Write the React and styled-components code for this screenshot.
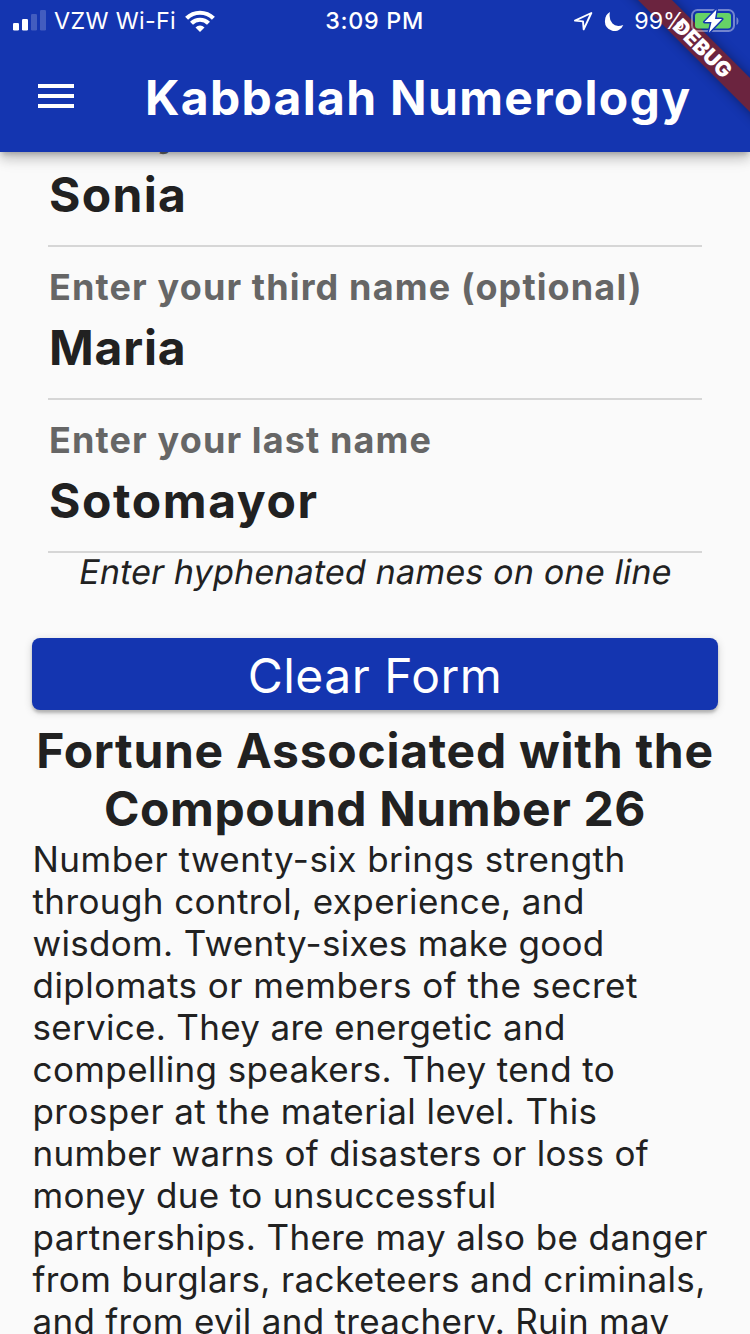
import React from "react";
import styled, { createGlobalStyle } from "styled-components";

const Global = createGlobalStyle`
  * { box-sizing: border-box; }
  body { margin: 0; background: #fafafa; }
`;

const Screen = styled.div`
  position: relative;
  display: flex;
  flex-direction: column;
  width: 750px;
  height: 1334px;
  overflow: hidden;
  background: #fafafa;
  color: #212121;
  font-family: Inter, "Liberation Sans", sans-serif;
`;

const Header = styled.header`
  position: relative;
  z-index: 1;
  flex: none;
  height: 152px;
  background: #1435b0;
  color: #fff;
  box-shadow: 0 4px 5px -2px rgba(0,0,0,.2), 0 8px 10px rgba(0,0,0,.14), 0 2px 20px rgba(0,0,0,.12);
`;

const StatusBar = styled.div`
  position: relative;
  z-index: 3;
  display: grid;
  grid-template-columns: 1fr auto 1fr;
  align-items: center;
  height: 40px;
  padding: 0 11px 0 13px;
  font-size: 23.3px;
  line-height: 42px;
`;

const StatusGroup = styled.div`
  display: flex;
  align-items: center;
  justify-content: ${(p) => (p.$end ? "flex-end" : "flex-start")};
  white-space: nowrap;
`;

const StatusText = styled.span`
  font-weight: ${(p) => p.$weight || 380};
  letter-spacing: ${(p) => p.$spacing || 0}px;
  margin: ${(p) => p.$margin || "0"};
`;

const Toolbar = styled.div`
  display: flex;
  align-items: center;
  height: 112px;
  padding-left: 38px;
`;

const MenuButton = styled.button`
  display: flex;
  border: 0;
  padding: 0;
  background: none;
`;

const Title = styled.h1`
  margin: 3px 0 0 71px;
  font-size: 48px;
  line-height: 56px;
  font-weight: 740;
  letter-spacing: 1.3px;
  white-space: nowrap;
`;

const DebugBanner = styled.div`
  position: absolute;
  z-index: 2;
  top: 35.5px;
  left: 602.5px;
  width: 200px;
  height: 24px;
  transform: rotate(45deg);
  background: #6b243f;
  box-shadow: 0 0 12px rgba(0, 0, 0, 0.4);
  color: #fff;
  font-size: 21px;
  line-height: 25px;
  font-weight: 900;
  text-align: center;
`;

const Content = styled.main`
  display: flex;
  flex-direction: column;
  margin-top: -58px;
`;

const Field = styled.label`
  display: flex;
  flex-direction: column;
  height: 153px;
  margin: 0 48px;
  padding: 17px 0 0 1px;
  border-bottom: 2px solid #d6d6d6;
  white-space: nowrap;
`;

const FieldLabel = styled.span`
  font-size: 36px;
  line-height: 46px;
  font-weight: 680;
  color: #666;
  letter-spacing: 1.13px;
`;

const FieldValue = styled.span`
  margin-top: 8px;
  font-size: 48px;
  line-height: 60px;
  font-weight: 700;
  letter-spacing: ${(p) => p.$spacing || 0}px;
`;

const Hint = styled.p`
  margin: -2px 6px 0 0;
  height: 87px;
  font-size: 34px;
  font-weight: 370;
  line-height: 42px;
  letter-spacing: 0.2px;
  transform: skewX(-10deg);
  text-align: center;
`;

const ClearButton = styled.button`
  height: 72px;
  margin: 0 32px;
  padding: 4px 0 0;
  border: 0;
  border-radius: 8px;
  background: #1435b0;
  color: #fff;
  font: 400 48px/68px Inter, "Liberation Sans", sans-serif;
  letter-spacing: 0.5px;
  box-shadow: 0 3px 3px rgba(0,0,0,.2), 0 2px 8px rgba(0,0,0,.16);
`;

const Heading = styled.h2`
  margin: 12px 0 0;
  font-size: 48px;
  line-height: 58px;
  font-weight: 690;
  text-align: center;
`;

const Fortune = styled.p`
  margin: 0 0 0 32.5px;
  font-size: 35px;
  font-weight: 380;
  line-height: 42px;
`;

const Line = styled.span`
  display: block;
  white-space: nowrap;
  letter-spacing: ${(p) => p.$spacing || 0}px;
`;

const Moon = styled.svg`
  margin-left: 10px;
`;

const Signal = () => (
  <svg width="34" height="22" viewBox="0 0 34 22" fill="#fff">
    <rect x="0" y="13" width="6" height="7.5" rx="1.3" />
    <rect x="9" y="9" width="6" height="11.5" rx="1.3" />
    <rect x="18" y="4" width="6" height="16.5" rx="1.3" opacity=".2" />
    <rect x="27" y="0" width="6" height="20.5" rx="1.3" opacity=".2" />
  </svg>
);

const Wifi = () => (
  <svg width="30" height="22" viewBox="0 0 30 22">
    <g fill="none" stroke="#fff" strokeWidth="4.2">
      <path d="M1.6 8.3a19 19 0 0 1 26.8 0" />
      <path d="M6.5 13.3a12 12 0 0 1 17 0" />
    </g>
    <path d="M15 22l-4.500-4.600a6.400 6.400 0 0 1 9 0z" fill="#fff" />
  </svg>
);

const fields = [
  ["Enter your second name", "Sonia", 1.3],
  ["Enter your third name (optional)", "Maria", 0.8],
  ["Enter your last name", "Sotomayor", 1.6],
];

const fortune = [
  ["Number twenty-six brings strength", 0.48],
  ["through control, experience, and", 0.4],
  ["wisdom. Twenty-sixes make good", 0.32],
  ["diplomats or members of the secret", 0.48],
  ["service. They are energetic and", 0.31],
  ["compelling speakers. They tend to", 0.39],
  ["prosper at the material level. This", 0.43],
  ["number warns of disasters or loss of", 0.31],
  ["money due to unsuccessful", 0.33],
  ["partnerships. There may also be danger", 0.4],
  ["from burglars, racketeers and criminals,", 0.37],
  ["and from evil and treachery. Ruin may", 0.31],
];

export default function App() {
  return (
    <Screen>
      <Global />
      <Header>
        <StatusBar>
          <StatusGroup>
            <Signal />
            <StatusText $margin="0 9px 0 7px" $spacing={0.35}>VZW Wi-Fi</StatusText>
            <Wifi />
          </StatusGroup>
          <StatusText $weight={500} $spacing={0.7} $margin="0 3px 0 0">3:09 PM</StatusText>
          <StatusGroup $end>
            <svg width="20" height="20" viewBox="0 0 20 20" fill="none" stroke="#fff" strokeWidth="1.9" strokeLinejoin="round">
              <path d="M17.300 2L1 9.600l8 .8.700 7.900z" />
            </svg>
            <Moon width="20" height="20" viewBox="0 0 20 20">
              <path d="M6 1C3 2.500 1 5.500 1 9.500a9.500 9.500 0 0 0 18.300 4.500Q12 16.500 8.500 12.500Q4.500 8 6 1z" fill="#fff" />
            </Moon>
            <StatusText $margin="0 5px 0 10px">99%</StatusText>
            <svg width="48" height="24" viewBox="0 0 48 24">
              <rect x="1" y="1" width="42" height="21" rx="5.5" fill="none" stroke="#fff" strokeOpacity=".4" strokeWidth="2" />
              <path d="M45.500 8v8q2-1 2-4t-2-4" fill="#fff" opacity=".4" />
              <rect x="4" y="4" width="36" height="15.5" rx="3" fill="#66d366" />
              <path d="M25.500 .5L13.500 13h7L18 23.500L31 10h-7z" fill="#fff" stroke="#1435b0" strokeWidth="3" strokeLinejoin="round" paintOrder="stroke" />
            </svg>
          </StatusGroup>
        </StatusBar>
        <Toolbar>
          <MenuButton aria-label="Menu">
            <svg width="36" height="24" viewBox="0 0 36 24" fill="#fff">
              <path d="M0 0h36v4H0zM0 10h36v4H0zM0 20h36v4H0z" />
            </svg>
          </MenuButton>
          <Title>Kabbalah Numerology</Title>
        </Toolbar>
        <DebugBanner>DEBUG</DebugBanner>
      </Header>
      <Content>
        {fields.map(([label, value, spacing]) => (
          <Field key={label}>
            <FieldLabel>{label}</FieldLabel>
            <FieldValue $spacing={spacing}>{value}</FieldValue>
          </Field>
        ))}
        <Hint>Enter hyphenated names on one line</Hint>
        <ClearButton>Clear Form</ClearButton>
        <Heading>
          <Line $spacing={0.73}>Fortune Associated with the</Line>
          <Line $spacing={0.6}>Compound Number 26</Line>
        </Heading>
        <Fortune>
          {fortune.map(([text, spacing]) => (
            <Line key={text} $spacing={spacing}>{text}</Line>
          ))}
        </Fortune>
      </Content>
    </Screen>
  );
}
